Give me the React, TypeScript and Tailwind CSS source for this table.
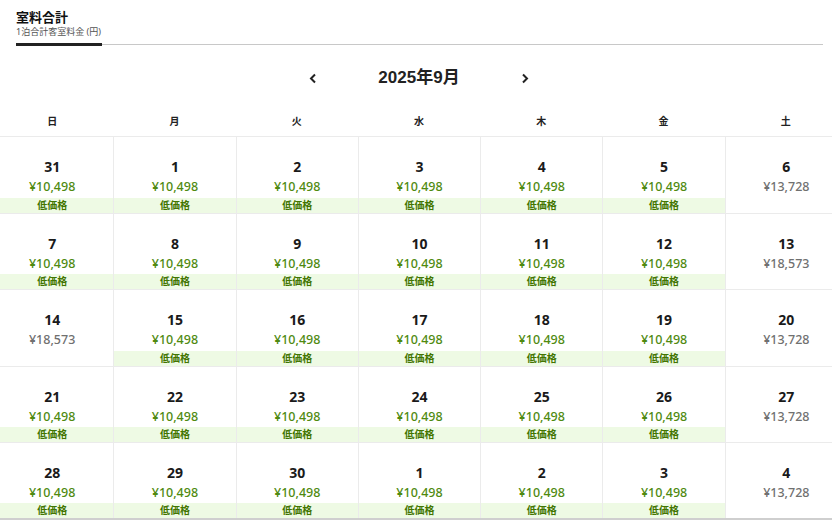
import React from "react";

type Cell = { d: number; p: string; low: boolean };

const G = "¥10,498";
const rows: Cell[][] = [
  [31, 1, 2, 3, 4, 5].map((d) => ({ d, p: G, low: true })).concat([{ d: 6, p: "¥13,728", low: false }]),
  [7, 8, 9, 10, 11, 12].map((d) => ({ d, p: G, low: true })).concat([{ d: 13, p: "¥18,573", low: false }]),
  [{ d: 14, p: "¥18,573", low: false } as Cell]
    .concat([15, 16, 17, 18, 19].map((d) => ({ d, p: G, low: true })))
    .concat([{ d: 20, p: "¥13,728", low: false }]),
  [21, 22, 23, 24, 25, 26].map((d) => ({ d, p: G, low: true })).concat([{ d: 27, p: "¥13,728", low: false }]),
  [28, 29, 30, 1, 2, 3].map((d) => ({ d, p: G, low: true })).concat([{ d: 4, p: "¥13,728", low: false }]),
];

const days = ["日", "月", "火", "水", "木", "金", "土"];

export default function App() {
  return (
    <div
      className="w-[832px] h-[530px] overflow-hidden bg-white text-[#222]"
      style={{ fontFamily: '"Noto Sans", "Noto Sans CJK JP", sans-serif' }}
    >
      {/* tabs */}
      <div className="pl-4 pr-[9px] pt-[8px]">
        <div className="flex border-b border-[#c8c8c8]">
          <div className="w-[86px] border-b-[3px] border-[#222] -mb-[2px] pb-[6px]">
            <div className="text-[13px] font-bold leading-[18px] text-[#111]">室料合計</div>
            <div className="text-[9px] leading-[11px] text-[#555] whitespace-nowrap">1泊合計客室料金 (円)</div>
          </div>
        </div>
      </div>

      <div className="w-[856px] -ml-[9px]">
        {/* month nav */}
        <div className="flex items-center justify-center h-[62px] pt-[4px]">
          <button className="w-[20px] flex justify-center text-[#222]">
            <svg width="8" height="11" viewBox="0 0 8 11">
              <path d="M6 1.5 L2 5.5 L6 9.5" stroke="#222" strokeWidth="2" fill="none" />
            </svg>
          </button>
          <div
            className="w-[192px] text-center text-[17px] font-semibold text-[#222]"
            style={{ fontFamily: '"Liberation Sans", "Noto Sans CJK JP", sans-serif' }}
          >
            2025年9月
          </div>
          <button className="w-[20px] flex justify-center">
            <svg width="8" height="11" viewBox="0 0 8 11">
              <path d="M2 1.5 L6 5.5 L2 9.5" stroke="#222" strokeWidth="2" fill="none" />
            </svg>
          </button>
        </div>

        {/* day header */}
        <div className="grid grid-cols-7 h-[30px] border-b border-[#ebebeb] items-center">
          {days.map((d) => (
            <div key={d} className="text-center text-[10px] font-bold text-[#222]">
              {d}
            </div>
          ))}
        </div>

        {/* rows */}
        {rows.map((r, i) => (
          <div
            key={i}
            className={
              "grid grid-cols-7 h-[76.6px] border-b " +
              (i === rows.length - 1 ? "border-b-2 border-[#cfcfcf]" : "border-[#ebebeb]")
            }
          >
            {r.map((c, j) => (
              <div
                key={j}
                className={"flex flex-col items-stretch pt-[20px] " + (j > 0 ? "border-l border-[#ebebeb]" : "")}
              >
                <div className="text-center text-[14px] font-bold leading-[20px] text-[#1a1a1a]">{c.d}</div>
                <div
                  className={
                    "text-center text-[12.5px] font-medium leading-[19px] " +
                    (c.low ? "text-[#4f8a10]" : "text-[#707070]")
                  }
                >
                  {c.p}
                </div>
                {c.low && (
                  <div className="mt-auto h-[15px] bg-[#eefae4] text-center text-[10px] font-bold leading-[15px] text-[#427500]">
                    低価格
                  </div>
                )}
              </div>
            ))}
          </div>
        ))}
      </div>
    </div>
  );
}
